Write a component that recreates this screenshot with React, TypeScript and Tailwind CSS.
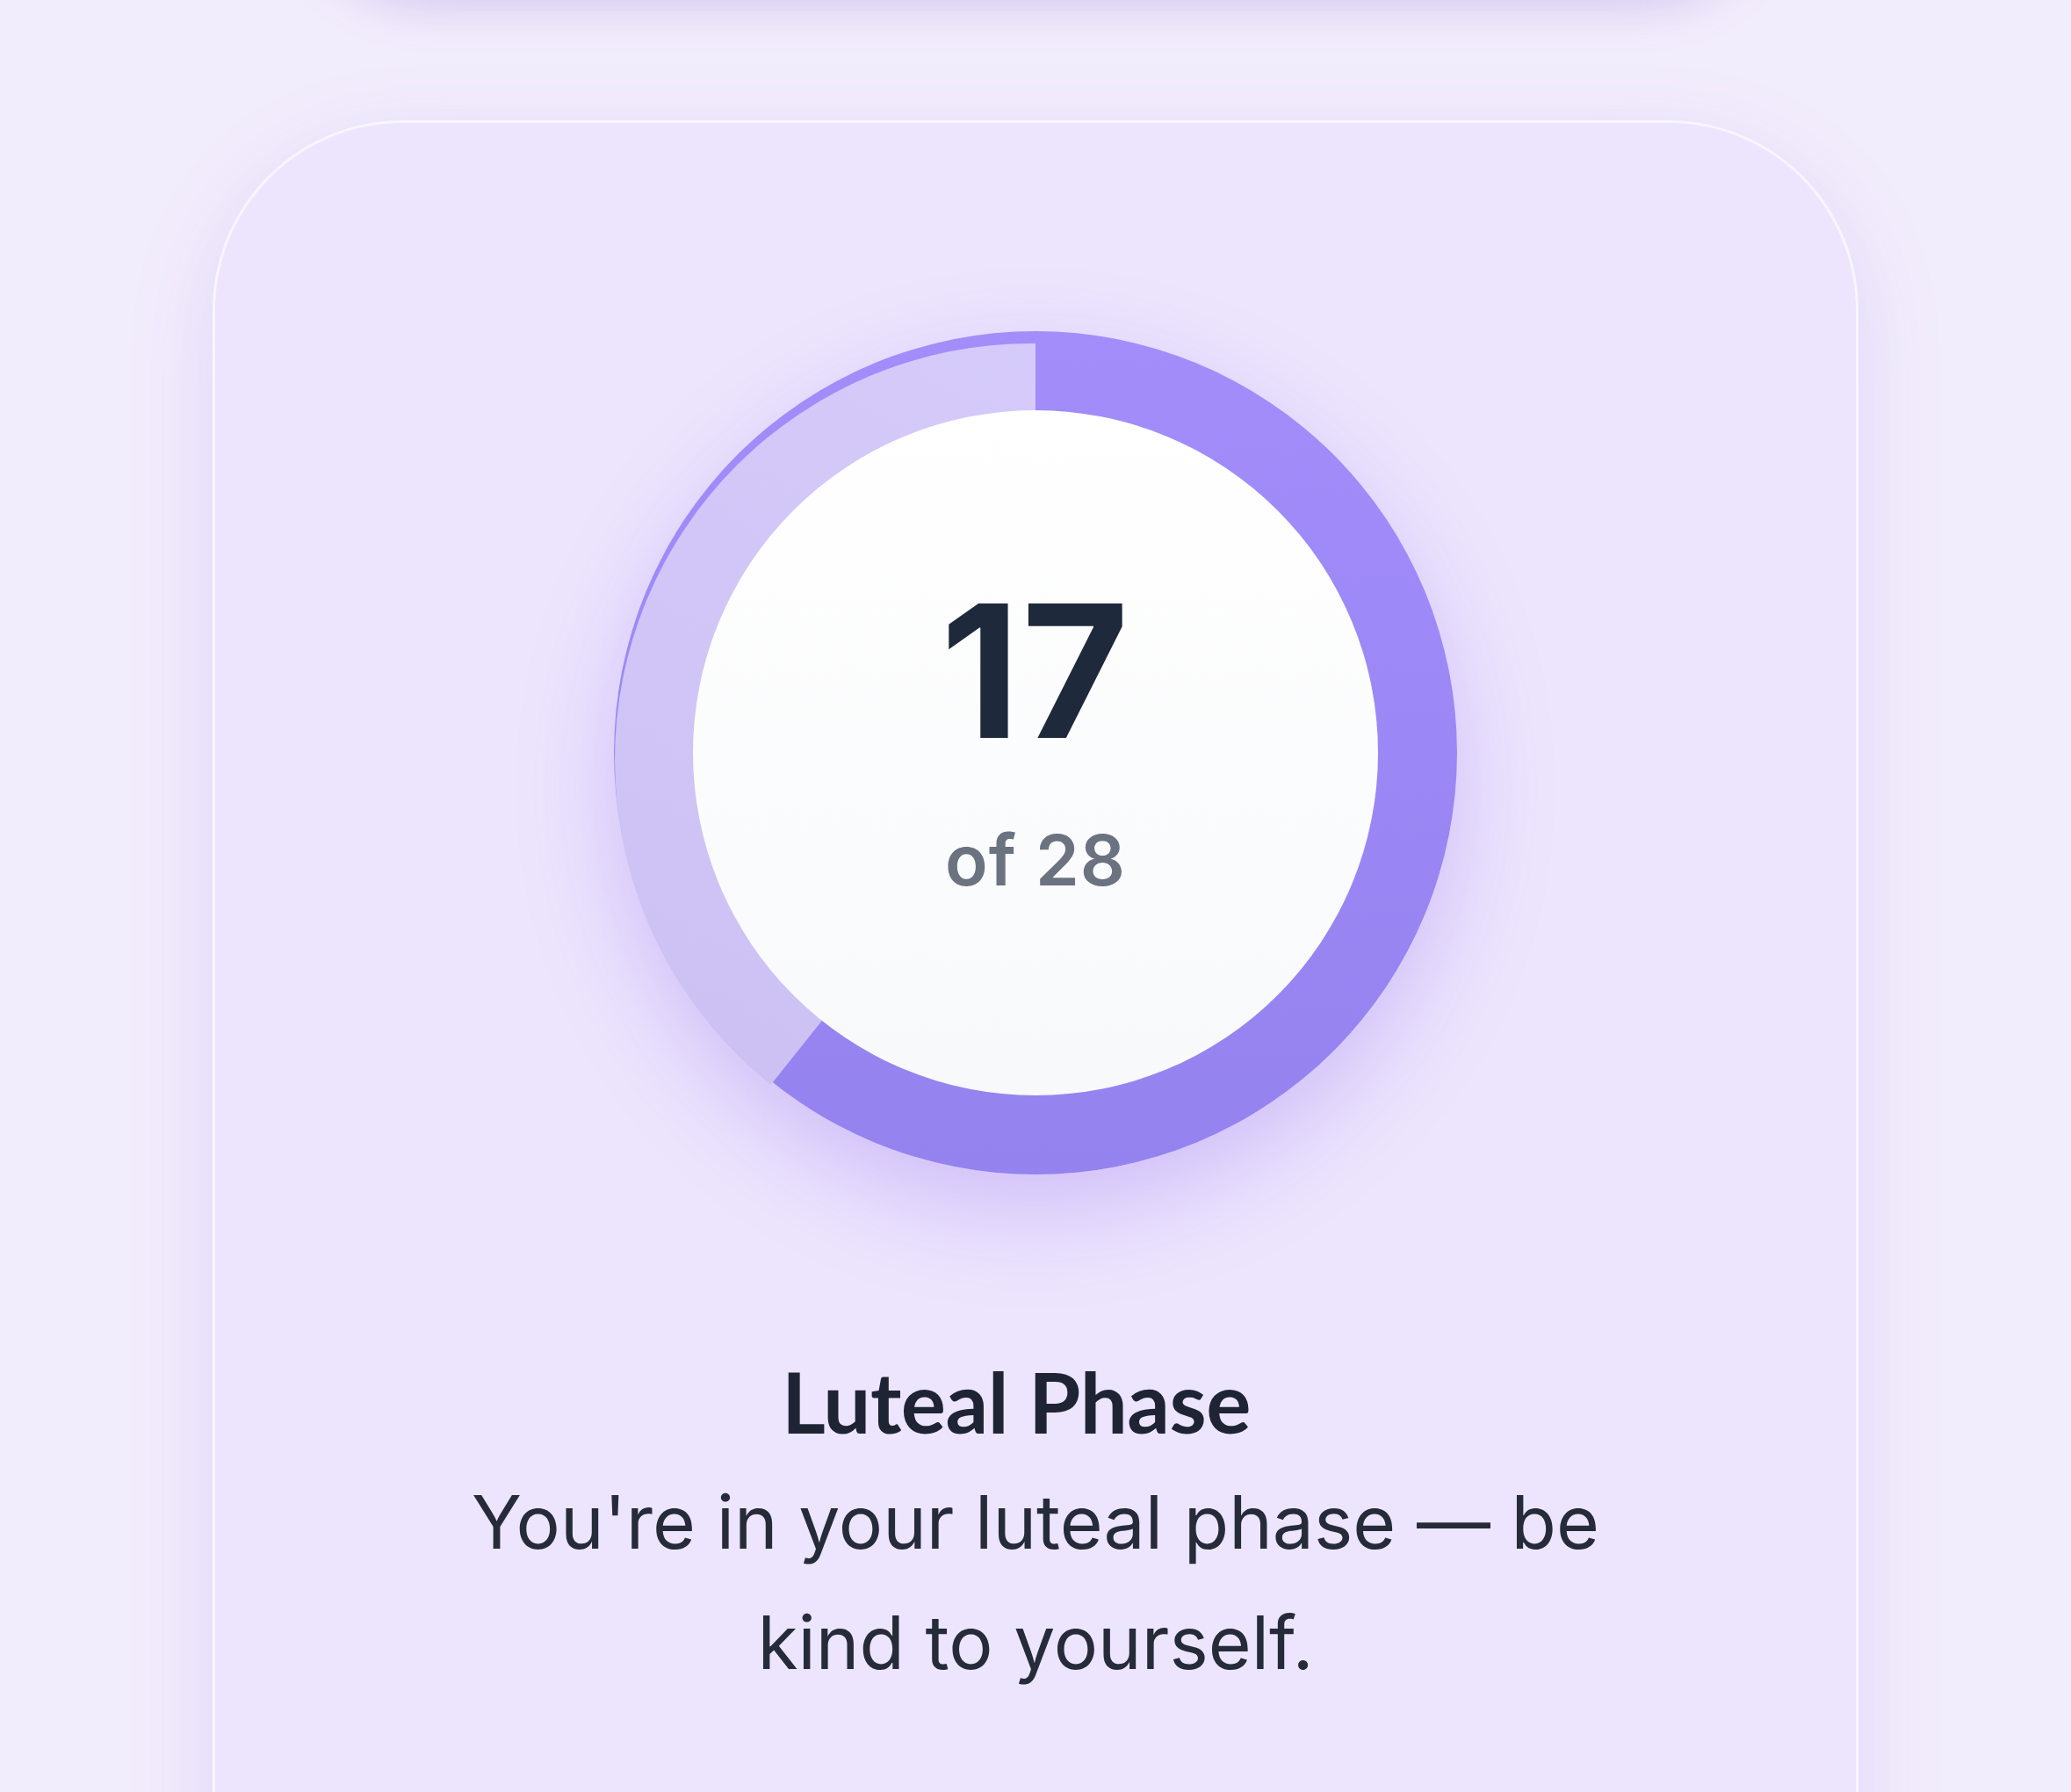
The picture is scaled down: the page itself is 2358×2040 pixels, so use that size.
import React from 'react';

const DAY = 17;
const CYCLE = 28;

// ring geometry (px)
const SIZE = 960;
const R_OUTER = 480;
const R_INNER = 390;

const polar = (deg: number, len: number) => {
  const rad = (deg * Math.PI) / 180;
  return [R_OUTER + len * Math.sin(rad), R_OUTER - len * Math.cos(rad)];
};

const CycleRing: React.FC<{ day: number; total: number }> = ({ day, total }) => {
  const angle = (day / total) * 360;
  const [x1, y1] = polar(angle, 760);
  const [x2, y2] = polar(360, 760);
  const large = 360 - angle > 180 ? 1 : 0;
  const wedge = `M${R_OUTER} ${R_OUTER} L${x1} ${y1} A760 760 0 ${large} 1 ${x2} ${y2} Z`;

  return (
    <div className="grid place-items-center">
      <div className="[grid-area:1/1] w-[960px] h-[960px] rounded-full shadow-[0_40px_110px_rgba(139,100,240,0.30)]">
        <svg width={SIZE} height={SIZE} viewBox={`0 0 ${SIZE} ${SIZE}`} className="block">
          <defs>
            <linearGradient id="prog" x1="0" y1="0" x2="0" y2="1">
              <stop offset="0%" stopColor="#a28dfb" />
              <stop offset="100%" stopColor="#9482ef" />
            </linearGradient>
            <linearGradient id="track" x1="0.7" y1="0" x2="0.2" y2="1">
              <stop offset="0%" stopColor="#d6ccfb" />
              <stop offset="100%" stopColor="#cbc0f2" />
            </linearGradient>
            <linearGradient id="face" x1="0" y1="0" x2="0" y2="1">
              <stop offset="0%" stopColor="#ffffff" />
              <stop offset="100%" stopColor="#f8f9fb" />
            </linearGradient>
            <clipPath id="rest">
              <path d={wedge} />
            </clipPath>
          </defs>
          <circle cx={R_OUTER} cy={R_OUTER} r={R_OUTER} fill="url(#prog)" />
          <g clipPath="url(#rest)">
            <circle cx={475} cy={488} r={474} fill="url(#track)" />
          </g>
          <circle cx={R_OUTER} cy={R_OUTER} r={R_INNER} fill="url(#face)" />
        </svg>
      </div>
      <div className="[grid-area:1/1] flex flex-col items-center pb-[36px]">
        <span className="font-['Inter',sans-serif] font-bold text-[210px] leading-none tracking-[2px] text-[#1e293b]">
          {day}
        </span>
        <span className="mt-[70px] font-['Inter',sans-serif] font-semibold text-[80px] leading-none tracking-[1px] text-[#6b7280]">
          of {total}
        </span>
      </div>
    </div>
  );
};

export default function App() {
  return (
    <div className="h-screen w-full overflow-hidden flex flex-col bg-[#f2edfc]">
      {/* card above, scrolled off the top */}
      <div className="shrink-0 -mt-[320px] mx-[360px] h-[300px] rounded-[120px] bg-[#f2edfc] shadow-[0_18px_60px_rgba(110,80,200,0.30)]" />

      <div className="shrink-0 mt-[157px] mx-[242px] rounded-[216px] border-[3px] border-white/60 bg-[#ede5fd] shadow-[0_30px_100px_rgba(124,92,230,0.16)] pt-[237px] pb-[400px] flex flex-col items-center">
        <CycleRing day={DAY} total={CYCLE} />

        <h2 className="mt-[200px] pr-[44px] font-['Lato',sans-serif] font-bold text-[96px] leading-[1.2] tracking-[-0.5px] text-[#1e2433]">
          Luteal Phase
        </h2>
        <p className="mt-[12px] max-w-[1400px] text-center font-['Inter',sans-serif] text-[84px] leading-[137px] text-[#262b3a]">
          You're in your luteal phase — be kind to yourself.
        </p>
      </div>
    </div>
  );
}
